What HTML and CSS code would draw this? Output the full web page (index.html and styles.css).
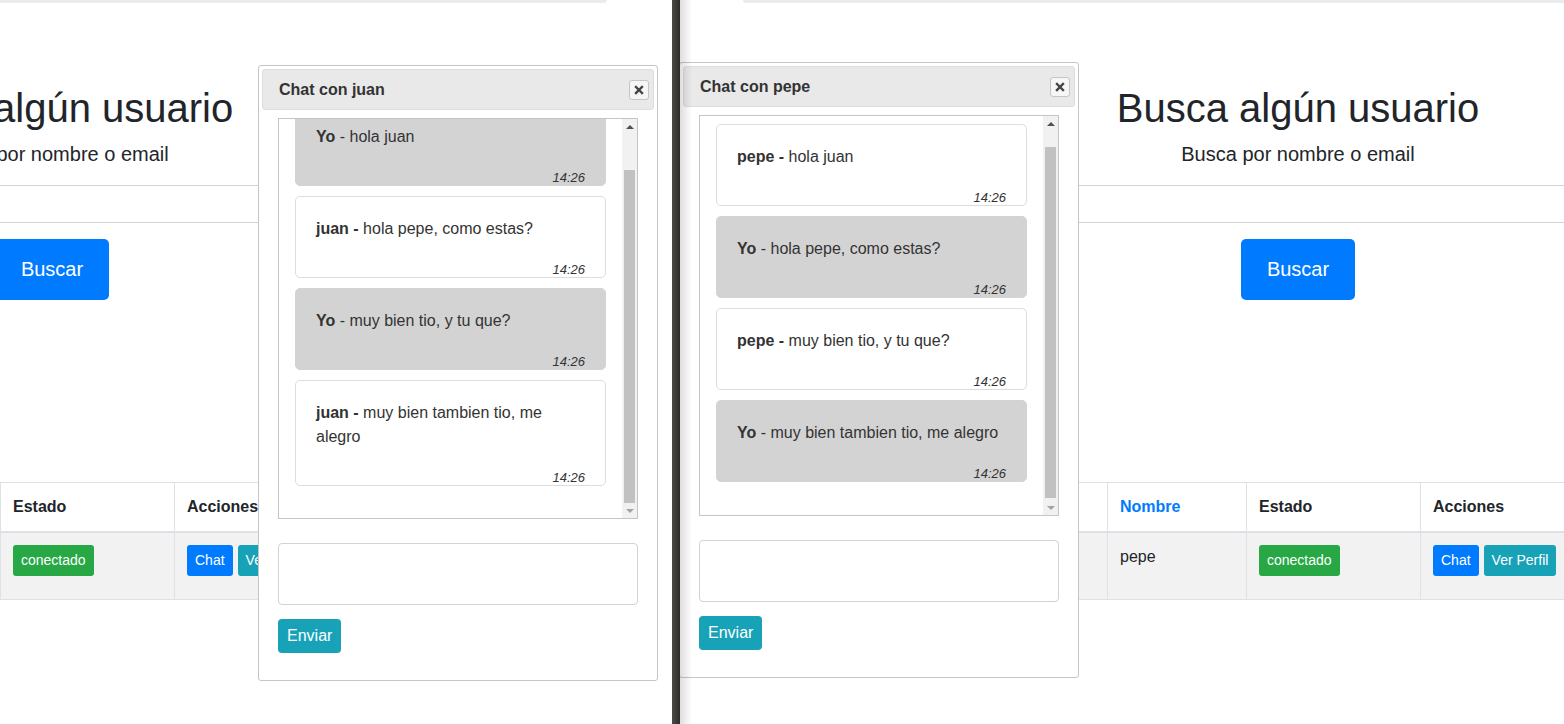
FILE: index.html
```html
<!DOCTYPE html>
<html lang="es">
<head>
<meta charset="utf-8">
<title>Chat</title>
<link rel="stylesheet" href="styles.css">
</head>
<body>
<div class="desktop">

  <div class="window win-left">
    <div class="container">
      <div class="jumbo-tail"></div>
      <h1 class="title">Busca algún usuario</h1>
      <p class="lead">Busca por nombre o email</p>
      <div class="search-input"></div>
      <div class="search-actions"><button class="btn btn-primary btn-lg">Buscar</button></div>
      <table class="users">
        <colgroup><col class="c1"><col class="c2"><col class="c3"><col class="c4"></colgroup>
        <thead>
          <tr><th>Email</th><th><span class="sort-link">Nombre</span></th><th>Estado</th><th>Acciones</th></tr>
        </thead>
        <tbody>
          <tr>
            <td>juan@gmail.com</td>
            <td>juan</td>
            <td><span class="btn btn-sm btn-success">conectado</span></td>
            <td><div class="actions"><span class="btn btn-sm btn-primary">Chat</span><span class="btn btn-sm btn-info">Ver Perfil</span></div></td>
          </tr>
        </tbody>
      </table>
    </div>

    <div class="dialog dialog-left">
      <div class="dialog-titlebar">
        <span class="dialog-title">Chat con juan</span>
        <span class="dialog-close"><svg width="10" height="10" viewBox="0 0 10 10"><path d="M2 2 L8 8 M8 2 L2 8" stroke="#444" stroke-width="2.4" stroke-linecap="square"/></svg></span>
      </div>
      <div class="dialog-content">
        <div class="msg-box">
          <div class="msg-viewport scrolled">
            <div class="msg mine"><p><b>Yo</b> - hola juan</p><i class="time">14:26</i></div>
            <div class="msg"><p><b>juan -</b> hola pepe, como estas?</p><i class="time">14:26</i></div>
            <div class="msg mine"><p><b>Yo</b> - muy bien tio, y tu que?</p><i class="time">14:26</i></div>
            <div class="msg"><p><b>juan -</b> muy bien tambien tio, me alegro</p><i class="time">14:26</i></div>
          </div>
          <div class="scrollbar">
            <div class="sb-btn"><span class="arrow-up"></span></div>
            <div class="sb-track"><div class="sb-thumb thumb-bottom"></div></div>
            <div class="sb-btn"><span class="arrow-down"></span></div>
          </div>
        </div>
        <textarea class="msg-input"></textarea>
        <button class="btn btn-info btn-send">Enviar</button>
      </div>
    </div>
  </div>

  <div class="divider"></div>

  <div class="window win-right">
    <div class="container">
      <div class="jumbo-tail"></div>
      <h1 class="title">Busca algún usuario</h1>
      <p class="lead">Busca por nombre o email</p>
      <div class="search-input"></div>
      <div class="search-actions"><button class="btn btn-primary btn-lg">Buscar</button></div>
      <table class="users">
        <colgroup><col class="c1"><col class="c2"><col class="c3"><col class="c4"></colgroup>
        <thead>
          <tr><th>Email</th><th><span class="sort-link">Nombre</span></th><th>Estado</th><th>Acciones</th></tr>
        </thead>
        <tbody>
          <tr>
            <td>pepe@gmail.com</td>
            <td>pepe</td>
            <td><span class="btn btn-sm btn-success">conectado</span></td>
            <td><div class="actions"><span class="btn btn-sm btn-primary">Chat</span><span class="btn btn-sm btn-info">Ver Perfil</span></div></td>
          </tr>
        </tbody>
      </table>
    </div>

    <div class="dialog dialog-right">
      <div class="dialog-titlebar">
        <span class="dialog-title">Chat con pepe</span>
        <span class="dialog-close"><svg width="10" height="10" viewBox="0 0 10 10"><path d="M2 2 L8 8 M8 2 L2 8" stroke="#444" stroke-width="2.4" stroke-linecap="square"/></svg></span>
      </div>
      <div class="dialog-content">
        <div class="msg-box">
          <div class="msg-viewport">
            <div class="msg"><p><b>pepe -</b> hola juan</p><i class="time">14:26</i></div>
            <div class="msg mine"><p><b>Yo</b> - hola pepe, como estas?</p><i class="time">14:26</i></div>
            <div class="msg"><p><b>pepe -</b> muy bien tio, y tu que?</p><i class="time">14:26</i></div>
            <div class="msg mine"><p><b>Yo</b> - muy bien tambien tio, me alegro</p><i class="time">14:26</i></div>
          </div>
          <div class="scrollbar">
            <div class="sb-btn"><span class="arrow-up"></span></div>
            <div class="sb-track"><div class="sb-thumb thumb-near-top"></div></div>
            <div class="sb-btn"><span class="arrow-down"></span></div>
          </div>
        </div>
        <textarea class="msg-input"></textarea>
        <button class="btn btn-info btn-send">Enviar</button>
      </div>
    </div>
    <div class="edge-shadow"></div>
  </div>

</div>
</body>
</html>
```

FILE: styles.css
```css
* { box-sizing: border-box; }

html, body {
  margin: 0;
  padding: 0;
  background: #fff;
}

body {
  font-family: "Liberation Sans", Arial, sans-serif;
  font-size: 16px;
  line-height: 1.5;
  color: #212529;
}

.desktop {
  position: relative;
  width: 1564px;
  height: 724px;
  overflow: hidden;
  background: #fff;
}

.window {
  position: absolute;
  top: 0;
  width: 1236px;
  height: 724px;
  background: #fff;
  overflow: hidden;
}

.win-left { left: -566px; }
.win-right { left: 680px; }

.divider {
  position: absolute;
  left: 672px;
  top: 0;
  width: 8px;
  height: 724px;
  background: linear-gradient(to right, #4b4a46 0, #3d3c38 50%, #2c2b28 100%);
  z-index: 5;
}

.edge-shadow {
  position: absolute;
  left: 0;
  top: 0;
  width: 12px;
  height: 724px;
  background: linear-gradient(to right, rgba(0,0,0,0.13), rgba(0,0,0,0));
  z-index: 4;
  pointer-events: none;
}

/* ---------- page ---------- */
.container {
  width: 1110px;
  margin: 0 auto;
}

.jumbo-tail {
  height: 3px;
  background: #e9ecef;
  border-radius: 0 0 4px 4px;
}

.title {
  margin: 81px 0 7px;
  font-size: 40px;
  line-height: 48px;
  font-weight: 400;
  text-align: center;
  color: #212529;
}

.lead {
  margin: 0 0 16px;
  font-size: 20px;
  line-height: 30px;
  text-align: center;
}

.search-input {
  height: 38px;
  border: 1px solid #ced4da;
  border-radius: 4px;
}

.search-actions {
  display: flex;
  justify-content: center;
  margin-top: 16px;
}

.btn {
  display: inline-block;
  border: 0;
  color: #fff;
  font-family: inherit;
  text-align: center;
  white-space: nowrap;
}

.btn-primary { background: #007bff; }
.btn-success { background: #28a745; }
.btn-info { background: #17a2b8; }

.btn-lg {
  font-size: 20px;
  line-height: 29px;
  padding: 16px 26px;
  border-radius: 5px;
}

.btn-sm {
  font-size: 14px;
  line-height: 21px;
  padding: 5px 8px;
  border-radius: 3px;
}

.users {
  margin-top: 182px;
  width: 1110px;
  table-layout: fixed;
  border-collapse: collapse;
}

.c1 { width: 364px; }
.c2 { width: 139px; }
.c3 { width: 174px; }
.c4 { width: 433px; }

.users th,
.users td {
  border: 1px solid #dee2e6;
  text-align: left;
  vertical-align: top;
  line-height: 24px;
}

.users th {
  padding: 12px;
  font-weight: 700;
  border-bottom-width: 2px;
}

.users td {
  padding: 12px 12px 23px;
}

.users tbody tr { background: #f2f2f2; }

.sort-link { color: #007bff; }

.actions {
  display: flex;
  gap: 5px;
}

/* ---------- dialog ---------- */
.dialog {
  position: absolute;
  width: 400px;
  padding: 3px;
  background: #fff;
  border: 1px solid #c5c5c5;
  border-radius: 3px;
  color: #333;
  z-index: 3;
}

.dialog-left { left: 824px; top: 65px; }
.dialog-right { left: -1px; top: 62px; }

.dialog-titlebar {
  display: flex;
  align-items: center;
  justify-content: space-between;
  height: 41px;
  padding: 0 4px 0 16px;
  background: #e9e9e9;
  border: 1px solid #dddddd;
  border-radius: 3px;
}

.dialog-title {
  font-weight: 700;
  font-size: 16px;
  color: #333;
}

.dialog-close {
  display: flex;
  align-items: center;
  justify-content: center;
  width: 20px;
  height: 20px;
  background: #f6f6f6;
  border: 1px solid #c5c5c5;
  border-radius: 3px;
}

.dialog-content {
  padding: 8px 16px 24px;
}

.msg-box {
  display: flex;
  height: 401px;
  border: 1px solid #c5c5c5;
}

.msg-viewport {
  flex: 1;
  overflow: hidden;
  padding: 8px 16px;
}

.msg-viewport.scrolled .msg:first-child { margin-top: -23px; }

.msg {
  background: #fff;
  border: 1px solid #dddddd;
  border-radius: 5px;
  padding: 20px 20px 0;
  margin-bottom: 10px;
  font-size: 16px;
  color: #333;
}

.msg.mine {
  background: #d3d3d3;
  border-color: #d3d3d3;
}

.msg p {
  margin: 0 0 22px;
  line-height: 24px;
}

.time {
  display: block;
  text-align: right;
  font-size: 13px;
  line-height: 14px;
  font-style: italic;
}

.scrollbar {
  width: 15px;
  display: flex;
  flex-direction: column;
  background: #f1f1f1;
}

.sb-btn {
  height: 15px;
  display: flex;
  align-items: center;
  justify-content: center;
}

.sb-track {
  flex: 1;
  display: flex;
  flex-direction: column;
}

.sb-thumb {
  margin: 0 2px;
  background: #c1c1c1;
  flex: 1;
}

.thumb-bottom { margin-top: 36px; }
.thumb-near-top { margin-top: 16px; margin-bottom: 2px; }

.arrow-up {
  width: 0;
  height: 0;
  border-left: 4px solid transparent;
  border-right: 4px solid transparent;
  border-bottom: 4px solid #505050;
}

.arrow-down {
  width: 0;
  height: 0;
  border-left: 4px solid transparent;
  border-right: 4px solid transparent;
  border-top: 4px solid #a3a3a3;
}

.msg-input {
  display: block;
  width: 100%;
  height: 62px;
  margin-top: 24px;
  border: 1px solid #ced4da;
  border-radius: 4px;
  resize: none;
  font-family: inherit;
  background: #fff;
}

.btn-send {
  display: block;
  margin-top: 14px;
  font-size: 16px;
  line-height: 24px;
  padding: 5px 9px;
  border-radius: 4px;
}
```
